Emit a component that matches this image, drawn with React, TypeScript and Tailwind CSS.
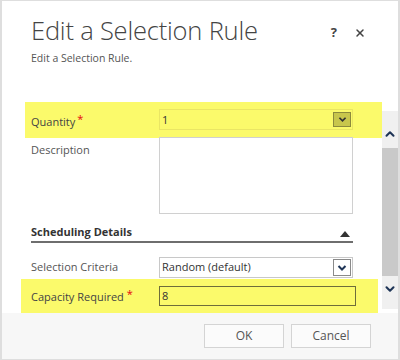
import { ChevronDown, ChevronUp, X } from "lucide-react";

// Dialogo "Edit a Selection Rule"
const font = { fontFamily: '"Open Sans", "Noto Sans", sans-serif' };

function Chevron({ className }: { className?: string }) {
  return (
    <svg viewBox="0 0 10 8" className={className}>
      <path d="M1.5 2 L5 5.5 L8.5 2" fill="none" stroke="currentColor" strokeWidth="2" />
    </svg>
  );
}

export default function App() {
  return (
    <div className="w-[400px] h-[360px] bg-white border-l-2 border-t border-r-2 border-b border-[#dedede] flex flex-col text-[#444]" style={font}>
      <div className="h-[101px] flex flex-col pl-[29px] pt-[13px] relative shrink-0">
        <h1 className="text-[25.5px] font-light leading-[32px] text-[#444] tracking-[-0.2px]">Edit a Selection Rule</h1>
        <p className="text-[10.5px] mt-[5px] text-[#555]">Edit a Selection Rule.</p>
        <div className="absolute top-[22px] right-[32px] flex items-center gap-[17px] text-[#444]">
          <span className="text-[13px] font-bold">?</span>
          <X size={12} strokeWidth={3} />
        </div>
      </div>

      <div className="flex flex-1 min-h-0">
        <div className="flex-1 flex flex-col">
          <div className="ml-[23px] h-[36px] bg-[#fbfa6b] flex items-center">
            <div className="w-[134px] pl-[6px] text-[11px] text-[#444] pt-[4px]">
              Quantity<span className="text-red-600 ml-[2px] relative -top-[3px]">*</span>
            </div>
            <div className="w-[194px] h-[21px] border border-[#eae664] flex items-center justify-between pl-[2px] pr-[1px]">
              <span className="text-[11px] text-[#333]">1</span>
              <div className="w-[18px] h-[15px] bg-[#c8c64c] border border-[#8c8a3c] flex items-center justify-center text-[#333]">
                <Chevron className="w-[9px] h-[7px]" />
              </div>
            </div>
          </div>

          <div className="flex h-[77px] pl-[29px]">
            <div className="w-[128px] text-[11px] text-[#555] pt-[4px]">Description</div>
            <div className="w-[194px] h-[77px] border border-[#d0d0d0] -mt-[1px]"></div>
          </div>

          <div className="ml-[29px] w-[322px] mt-[10px] h-[19px] border-b-2 border-[#6e6e6e] flex items-start justify-between">
            <span className="text-[11px] font-bold text-[#333]">Scheduling Details</span>
            <svg viewBox="0 0 10 6" className="w-[10px] h-[6px] mr-[3px] mt-[7px]">
              <path d="M0 6 L5 0 L10 6 Z" fill="#333" />
            </svg>
          </div>

          <div className="flex items-center pl-[29px] mt-[14px] h-[21px]">
            <div className="w-[128px] text-[11px] text-[#555]">Selection Criteria</div>
            <div className="w-[194px] h-[21px] border border-[#c8c8c8] flex items-center justify-between pl-[2px] pr-[1px]">
              <span className="text-[11px] text-[#333]">Random (default)</span>
              <div className="w-[18px] h-[17px] bg-white border border-[#8a8a8a] flex items-center justify-center text-[#1f3557]">
                <Chevron className="w-[10px] h-[8px]" />
              </div>
            </div>
          </div>

          <div className="ml-[19px] mr-[4px] mt-[1px] h-[34px] bg-[#fbfa6b] flex items-center">
            <div className="w-[138px] pl-[10px] text-[11px] text-[#444] pt-[2px]">
              Capacity Required<span className="text-red-600 ml-[3px] relative -top-[3px]">*</span>
            </div>
            <div className="w-[197px] h-[20px] border border-[#6e6d3a] flex items-center pl-[2px]">
              <span className="text-[11px] text-[#333]">8</span>
            </div>
          </div>
        </div>

        <div className="w-[16px] mt-[9px] mb-[4px] bg-[#f0f0f0] flex flex-col items-center">
          <ChevronUp size={14} strokeWidth={3.5} className="text-[#1f3557] mt-[16px]" />
          <div className="w-full bg-[#c9c9c9] mt-[7px] h-[128px]"></div>
          <ChevronDown size={14} strokeWidth={3.5} className="text-[#1f3557] mt-[6px]" />
        </div>
      </div>

      <div className="h-[46px] shrink-0 bg-[#f7f7f7] flex items-start justify-end gap-[7px] pr-[27px] pt-[11px]">
        <button className="w-[80px] h-[24px] bg-[#fbfbfb] border border-[#d4d4d4] text-[12px] text-[#555]">OK</button>
        <button className="w-[80px] h-[24px] bg-[#fbfbfb] border border-[#d4d4d4] text-[12px] text-[#555]">Cancel</button>
      </div>
    </div>
  );
}
